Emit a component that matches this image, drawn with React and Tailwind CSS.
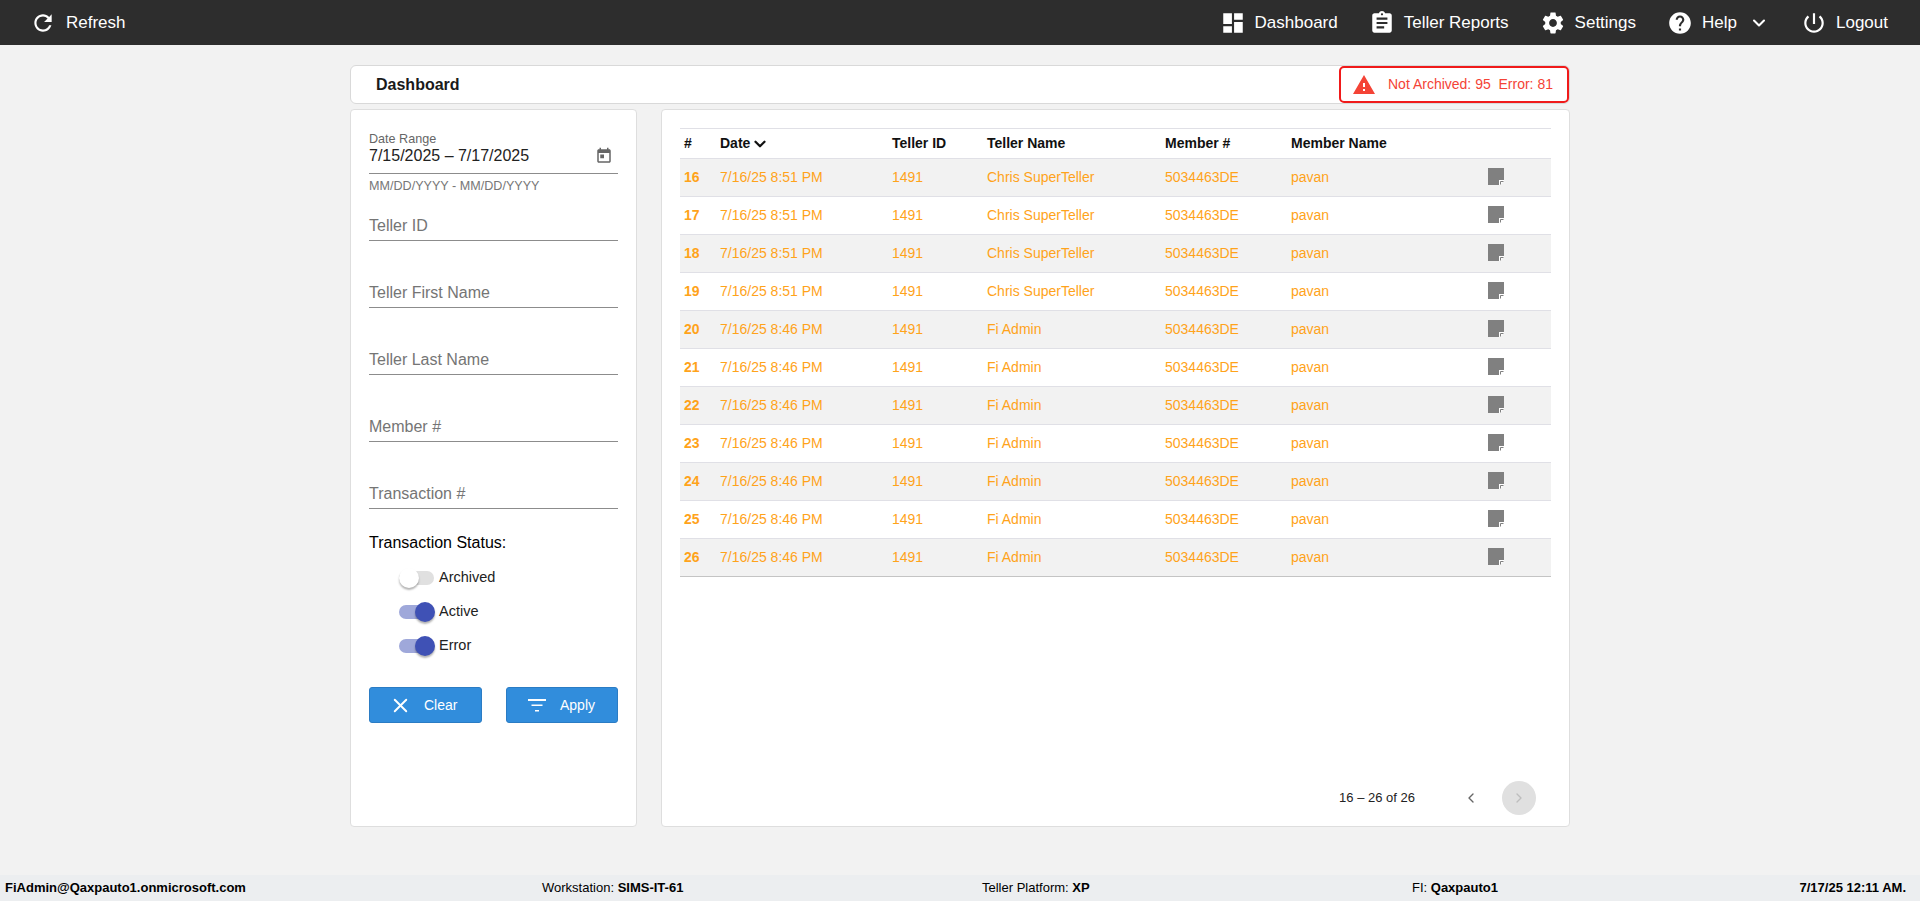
import { ChevronDown, ChevronLeft, ChevronRight, X } from 'lucide-react';

const rows = [
  [16, '7/16/25 8:51 PM', 'Chris SuperTeller'],
  [17, '7/16/25 8:51 PM', 'Chris SuperTeller'],
  [18, '7/16/25 8:51 PM', 'Chris SuperTeller'],
  [19, '7/16/25 8:51 PM', 'Chris SuperTeller'],
  [20, '7/16/25 8:46 PM', 'Fi Admin'],
  [21, '7/16/25 8:46 PM', 'Fi Admin'],
  [22, '7/16/25 8:46 PM', 'Fi Admin'],
  [23, '7/16/25 8:46 PM', 'Fi Admin'],
  [24, '7/16/25 8:46 PM', 'Fi Admin'],
  [25, '7/16/25 8:46 PM', 'Fi Admin'],
  [26, '7/16/25 8:46 PM', 'Fi Admin'],
];

const fields = ['Teller ID', 'Teller First Name', 'Teller Last Name', 'Member #', 'Transaction #'];

function MatIcon({ d, size = 26 }) {
  return (
    <svg width={size} height={size} viewBox="0 0 24 24" fill="white" className="shrink-0">
      <path d={d} />
    </svg>
  );
}

const icons = {
  refresh: 'M17.65 6.35C16.2 4.9 14.21 4 12 4c-4.42 0-7.99 3.58-7.99 8s3.57 8 7.99 8c3.73 0 6.84-2.55 7.73-6h-2.08c-.82 2.33-3.04 4-5.65 4-3.31 0-6-2.69-6-6s2.690-6 6-6c1.660 0 3.140.69 4.220 1.780L13 11h7V4l-2.350 2.350z',
  dashboard: 'M3 13h8V3H3v10zm0 8h8v-6H3v6zm10 0h8V11h-8v10zm0-18v6h8V3h-8z',
  report: 'M19 3h-4.180C14.400 1.840 13.300 1 12 1s-2.400.840-2.820 2H5c-1.100 0-2 .9-2 2v14c0 1.100.9 2 2 2h14c1.100 0 2-.9 2-2V5c0-1.100-.9-2-2-2zm-7 0c.550 0 1 .450 1 1s-.450 1-1 1-1-.450-1-1 .450-1 1-1zm2 14H7v-2h7v2zm3-4H7v-2h10v2zm0-4H7V7h10v2z',
  settings: 'M19.140 12.940c.040-.3.060-.610.060-.940 0-.320-.020-.640-.070-.940l2.030-1.580c.180-.140.230-.410.120-.610l-1.920-3.320c-.120-.220-.370-.290-.590-.220l-2.390.960c-.5-.380-1.030-.7-1.620-.940l-.360-2.540c-.040-.240-.240-.410-.480-.410h-3.840c-.240 0-.430.170-.470.410l-.360 2.540c-.590.240-1.130.570-1.620.940l-2.390-.960c-.220-.080-.470 0-.590.220L2.740 8.870c-.120.210-.080.470.120.610l2.030 1.580c-.050.3-.090.630-.090.940s.020.640.070.940l-2.030 1.580c-.180.140-.230.410-.120.610l1.920 3.320c.120.220.370.290.590.220l2.390-.960c.5.380 1.030.7 1.620.940l.360 2.540c.050.240.240.410.480.410h3.840c.240 0 .440-.170.470-.410l.360-2.540c.590-.240 1.130-.560 1.620-.940l2.390.960c.220.080.470 0 .590-.220l1.920-3.320c.120-.220.070-.470-.120-.610l-2.010-1.580zM12 15.600c-1.980 0-3.600-1.620-3.600-3.600s1.620-3.600 3.600-3.600 3.600 1.620 3.600 3.600-1.620 3.600-3.600 3.600z',
  help: 'M12 2C6.480 2 2 6.480 2 12s4.480 10 10 10 10-4.480 10-10S17.520 2 12 2zm1 17h-2v-2h2v2zm2.070-7.750l-.9.920C13.450 12.900 13 13.500 13 15h-2v-.5c0-1.100.450-2.100 1.170-2.830l1.240-1.260c.370-.360.590-.860.590-1.410 0-1.100-.9-2-2-2s-2 .9-2 2H8c0-2.210 1.790-4 4-4s4 1.790 4 4c0 .880-.360 1.680-.930 2.250z',
  power: 'M13 3h-2v10h2V3zm4.830 2.170l-1.420 1.420C17.990 7.860 19 9.810 19 12c0 3.870-3.130 7-7 7s-7-3.130-7-7c0-2.190 1.010-4.140 2.580-5.420L6.170 5.170C4.230 6.820 3 9.260 3 12c0 4.970 4.030 9 9 9s9-4.030 9-9c0-2.740-1.230-5.180-3.170-6.830z',
};

function NoteIcon() {
  return (
    <svg width="16" height="17" viewBox="0 0 16 17" className="block">
      <path d="M0 0h16v12h-5v5H0z" fill="#808080" />
      <path d="M11 17v-5h5v1l-4 4z" fill="#ffffff" />
      <path d="M12.500 16.500v-3h3" fill="none" stroke="#808080" strokeWidth="1" />
    </svg>
  );
}

function NavItem({ icon, label, className = '' }) {
  return (
    <div className={`flex items-center gap-[9px] ${className}`}>
      <MatIcon d={icons[icon]} />
      <span>{label}</span>
    </div>
  );
}

function Toggle({ label, on }) {
  return (
    <div className="flex items-center h-[34px] pl-[30px]">
      <div className="relative w-[35px] h-[14px] mr-[5px]">
        <div className={`h-[14px] w-[35px] rounded-full ${on ? 'bg-[#9fa8da]' : 'bg-[#e0e0e0]'}`} />
        <div
          className={`absolute top-[-3px] w-[20px] h-[20px] rounded-full shadow-[0_2px_2px_rgba(0,0,0,0.3)] ${
            on ? 'left-[16px] bg-[#3f51b5]' : 'left-0 bg-white'
          }`}
        />
      </div>
      <span className="text-[14.5px] text-[#222]">{label}</span>
    </div>
  );
}

function TextField({ label }) {
  return (
    <div className="h-[67px] flex items-end">
      <div className="w-full border-b border-[#8c8c8c] h-[26px] pt-[1px] text-[16px] leading-[20px] text-[#757575]">{label}</div>
    </div>
  );
}

export default function App() {
  return (
    <div className="h-[901px] flex flex-col bg-[#f2f2f2] font-['Liberation_Sans',Arial,sans-serif] overflow-hidden">
      <header className="h-[45px] shrink-0 bg-[#2d2d2d] text-white text-[17px] flex items-center justify-between pl-[30px] pr-[32px]">
        <div className="flex items-center gap-[10px]">
          <MatIcon d={icons.refresh} />
          <span>Refresh</span>
        </div>
        <div className="flex items-center">
          <NavItem icon="dashboard" label="Dashboard" className="mr-[31px]" />
          <NavItem icon="report" label="Teller Reports" className="mr-[31px]" />
          <NavItem icon="settings" label="Settings" className="mr-[31px]" />
          <NavItem icon="help" label="Help" />
          <ChevronDown size={20} strokeWidth={2.5} className="ml-[12px] mr-[32px]" />
          <NavItem icon="power" label="Logout" />
        </div>
      </header>

      <main className="flex-1 w-[1220px] ml-[350px] pt-[20px]">
        <div className="h-[39px] bg-white border border-[#d9d9d9] rounded-[6px] flex items-center justify-between">
          <h1 className="pl-[25px] text-[16px] font-bold text-[#1a1a1a]">Dashboard</h1>
          <div className="h-[37px] w-[230px] border-2 border-[#f01a1a] rounded-[5px] flex items-center pl-[11px] gap-[10px] text-[14px] text-[#f44336]">
            <svg width="24" height="24" viewBox="0 0 24 24" fill="#f44336">
              <path d="M1 21h22L12 2 1 21zm12-3h-2v-2h2v2zm0-4h-2v-4h2v4z" />
            </svg>
            <span className="whitespace-pre ml-[2px]">Not Archived: 95  Error: 81</span>
          </div>
        </div>

        <div className="flex gap-[24px] mt-[5px] h-[718px]">
          <aside className="w-[287px] bg-white border border-[#dedede] rounded-[4px] px-[18px] pt-[22px]">
            <div className="h-[42px] border-b border-[#8c8c8c] relative">
              <div className="text-[12.6px] leading-[14px] text-[#666]">Date Range</div>
              <div className="text-[16px] leading-[20px] text-[#222]">7/15/2025 – 7/17/2025</div>
              <svg className="absolute right-[5px] top-[15px]" width="18" height="18" viewBox="0 0 24 24" fill="#666">
                <path d="M19 3h-1V1h-2v2H8V1H6v2H5c-1.110 0-1.990.9-1.990 2L3 19c0 1.100.890 2 2 2h14c1.100 0 2-.9 2-2V5c0-1.100-.9-2-2-2zm0 16H5V8h14v11zM7 10h5v5H7z" />
              </svg>
            </div>
            <div className="text-[12.6px] leading-[14px] text-[#777] mt-[5px] mb-[-1px]">MM/DD/YYYY - MM/DD/YYYY</div>
            <div className="mt-[-19px]">
              {fields.map((f) => (
                <TextField key={f} label={f} />
              ))}
            </div>
            <div className="text-[16px] leading-[18px] text-black mt-[25px] mb-[9px]">Transaction Status:</div>
            <Toggle label="Archived" on={false} />
            <Toggle label="Active" on />
            <Toggle label="Error" on />
            <div className="flex justify-between mt-[24px]">
              <button className="w-[113px] h-[36px] bg-[#318ddc] border border-[#2b7cc4] rounded-[3px] text-white text-[14px] flex items-center pl-[19px] gap-[12px]">
                <X size={23} strokeWidth={2} />
                <span>Clear</span>
              </button>
              <button className="w-[112px] h-[36px] bg-[#318ddc] border border-[#2b7cc4] rounded-[3px] text-white text-[14px] flex items-center pl-[18px] gap-[11px]">
                <svg width="24" height="24" viewBox="0 0 24 24" fill="white">
                  <path d="M3 6h18v2H3zM6.500 11.500h11v1.500h-11zM10 17h4v1.500h-4z" />
                </svg>
                <span>Apply</span>
              </button>
            </div>
          </aside>

          <section className="w-[909px] bg-white border border-[#dedede] rounded-[4px] px-[18px] pt-[18px] flex flex-col">
            <table className="w-[871px] table-fixed border-collapse text-[14px]">
              <colgroup>
                <col className="w-[40px]" />
                <col className="w-[172px]" />
                <col className="w-[95px]" />
                <col className="w-[178px]" />
                <col className="w-[126px]" />
                <col className="w-[190px]" />
                <col />
              </colgroup>
              <thead>
                <tr className="h-[30px] border-t border-b border-[#e0e0e6] text-left font-bold text-[#111]">
                  <th className="pl-[4px]">#</th>
                  <th>
                    <span className="inline-flex items-center">
                      Date
                      <ChevronDown size={18} strokeWidth={3} className="ml-[1px]" />
                    </span>
                  </th>
                  <th>Teller ID</th>
                  <th>Teller Name</th>
                  <th>Member #</th>
                  <th>Member Name</th>
                  <th />
                </tr>
              </thead>
              <tbody>
                {rows.map(([n, date, name], i) => (
                  <tr
                    key={n}
                    className={`h-[38px] border-b text-[#ffa31a] ${i === rows.length - 1 ? 'border-[#c4c4c4]' : 'border-[#e0e0e6]'} ${
                      i % 2 === 0 ? 'bg-[#f2f2f2]' : 'bg-white'
                    }`}
                  >
                    <td className="pl-[4px] font-bold">{n}</td>
                    <td>{date}</td>
                    <td>1491</td>
                    <td>{name}</td>
                    <td>5034463DE</td>
                    <td>pavan</td>
                    <td className="pl-[7px]">
                      <div className="mt-[-3px]">
                        <NoteIcon />
                      </div>
                    </td>
                  </tr>
                ))}
              </tbody>
            </table>
            <div className="mt-auto pb-[11px] flex items-center justify-end pr-[15px]">
              <span className="text-[13px] text-[#222] mr-[39px]">16 – 26 of 26</span>
              <button className="w-[34px] h-[34px] flex items-center justify-center text-[#666] mr-[14px]">
                <ChevronLeft size={16} strokeWidth={2} />
              </button>
              <button className="w-[34px] h-[34px] rounded-full bg-[#e0e0e0] flex items-center justify-center text-[#bdbdbd]">
                <ChevronRight size={16} strokeWidth={2} />
              </button>
            </div>
          </section>
        </div>
      </main>

      <footer className="h-[26px] shrink-0 bg-[#eceef0] text-[13px] text-black grid grid-cols-[537px_440px_430px_1fr] items-center pl-[5px] pr-[14px]">
        <span className="font-bold">FiAdmin@Qaxpauto1.onmicrosoft.com</span>
        <span>
          Workstation: <b>SIMS-IT-61</b>
        </span>
        <span>
          Teller Platform: <b>XP</b>
        </span>
        <div className="flex justify-between">
          <span>
            FI: <b>Qaxpauto1</b>
          </span>
          <span className="font-bold">7/17/25 12:11 AM.</span>
        </div>
      </footer>
    </div>
  );
}
